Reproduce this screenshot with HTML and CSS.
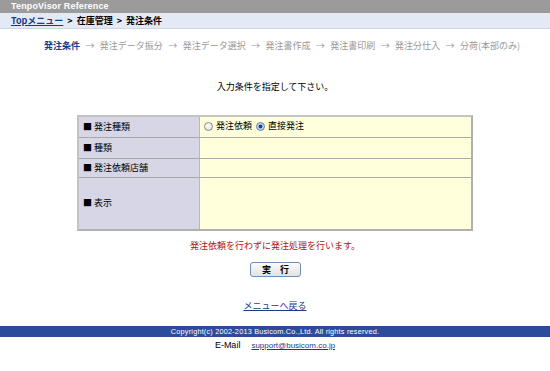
FILE: index.html
```html
<!DOCTYPE html>
<html lang="ja">
<head>
<meta charset="utf-8">
<title>TenpoVisor Reference</title>
<link rel="stylesheet" href="styles.css">
</head>
<body>
<div class="titlebar">TenpoVisor Reference</div>
<div class="crumb"><a href="#" class="toplink">Topメニュー</a><span class="sep">&gt;</span>在庫管理<span class="sep">&gt;</span>発注条件</div>
<div class="steps">
  <span class="cur">発注条件</span><span class="arr">→</span><span>発注データ振分</span><span class="arr">→</span><span>発注データ選択</span><span class="arr">→</span><span>発注書作成</span><span class="arr">→</span><span>発注書印刷</span><span class="arr">→</span><span>発注分仕入</span><span class="arr">→</span><span>分荷(本部のみ)</span>
</div>
<div class="msg">入力条件を指定して下さい。</div>
<table class="form">
  <tr class="r1">
    <th>■ 発注種類</th>
    <td><label class="radio"><span class="rb"></span>発注依頼</label><label class="radio"><span class="rb on"></span>直接発注</label></td>
  </tr>
  <tr class="r2"><th>■ 種類</th><td></td></tr>
  <tr class="r3"><th>■ 発注依頼店舗</th><td></td></tr>
  <tr class="r4"><th>■ 表示</th><td></td></tr>
</table>
<div class="note">発注依頼を行わずに発注処理を行います。</div>
<div class="btnrow"><button class="btn">実　行</button></div>
<div class="back"><a href="#">メニューへ戻る</a></div>
<div class="footer">Copyright(c) 2002-2013 Busicom.Co.,Ltd. All rights reserved.</div>
<div class="mail">E-Mail<a href="#">support@busicom.co.jp</a></div>
</body>
</html>
```
FILE: styles.css
```css
html, body {
  margin: 0;
  padding: 0;
  background: #ffffff;
}
body {
  font-family: "Noto Sans CJK JP", "Liberation Sans", sans-serif;
  font-size: 9px;
  color: #000;
  line-height: 1.2;
}
.titlebar {
  background: #9b9b9b;
  color: #fff;
  font-family: "Liberation Sans", sans-serif;
  font-weight: bold;
  font-size: 9px;
  letter-spacing: 0.15px;
  height: 13px;
  line-height: 13px;
  padding-left: 11px;
}
.crumb {
  background: #e3eaf5;
  height: 15px;
  line-height: 15px;
  padding-left: 11px;
  font-weight: bold;
  border-bottom: 1px solid #d0d6e0;
}
.crumb .toplink {
  color: #1a3a8a;
}
.crumb .sep {
  margin: 0 4px;
}
.steps {
  padding: 10px 0 0 44px;
  height: 13px;
  line-height: 13px;
  color: #999;
  white-space: nowrap;
}
.steps .cur {
  color: #1c3c8c;
  font-weight: bold;
}
.steps .arr {
  margin: 0 5.4px;
}
.msg {
  text-align: center;
  margin-top: 28px;
  height: 13px;
  line-height: 13px;
}
.form {
  margin: 22px auto 0;
  width: 396px;
  border-collapse: separate;
  border-spacing: 0;
  border: 2px solid #c4c4c4;
  border-right-color: #b0b0b0;
  border-bottom-color: #b0b0b0;
}
.form th, .form td {
  padding: 0 4px;
  text-align: left;
  vertical-align: middle;
  border-bottom: 1px solid #a8a8a8;
}
.form tr:last-child th, .form tr:last-child td {
  border-bottom: none;
}
.form th {
  width: 112px;
  background: #d6d6e6;
  font-weight: normal;
  border-right: 1px solid #b8b8b8;
}
.form td {
  background: #ffffdc;
}
.r1 th, .r1 td { height: 20px; }
.r2 th, .r2 td { height: 20px; }
.r3 th, .r3 td { height: 18px; }
.r4 th, .r4 td { height: 51px; }
.radio {
  display: inline-flex;
  align-items: center;
  margin-right: 4px;
}
.rb {
  width: 9px;
  height: 9px;
  border-radius: 50%;
  border: 1px solid #8a8a8a;
  background: radial-gradient(circle at 35% 35%, #ffffff, #d8d8d8);
  margin-right: 3px;
  box-sizing: border-box;
}
.rb.on {
  background: radial-gradient(circle, #1e3f80 0 1.6px, #a8c4e8 2.2px, #e8f0fa 4px);
  border-color: #5a7aa8;
}
.note {
  text-align: center;
  color: #b01010;
  margin-top: 8px;
  height: 13px;
  line-height: 13px;
}
.btnrow {
  text-align: center;
  margin-top: 10px;
}
.btn {
  width: 51px;
  height: 15px;
  padding: 0;
  font-family: "Noto Sans CJK JP", sans-serif;
  font-size: 9px;
  line-height: 12px;
  font-weight: bold;
  color: #000;
  border: 1px solid #6f8fb0;
  border-radius: 3px;
  background: linear-gradient(#fbfbfb, #e2e2e2);
  margin-left: 1px;
}
.back {
  text-align: center;
  margin-top: 22px;
  height: 13px;
  line-height: 13px;
}
.back a {
  color: #1a3a8a;
}
.footer {
  margin-top: 14px;
  background: #2d4b9b;
  color: #fff;
  text-align: center;
  font-family: "Liberation Sans", sans-serif;
  font-size: 7.3px;
  letter-spacing: 0.2px;
  height: 11px;
  line-height: 11px;
}
.mail {
  text-align: center;
  margin-top: 2px;
  font-family: "Liberation Sans", sans-serif;
  font-size: 9px;
  height: 13px;
  line-height: 13px;
}
.mail a {
  color: #1a3a8a;
  font-size: 8px;
  margin-left: 11px;
}
```
